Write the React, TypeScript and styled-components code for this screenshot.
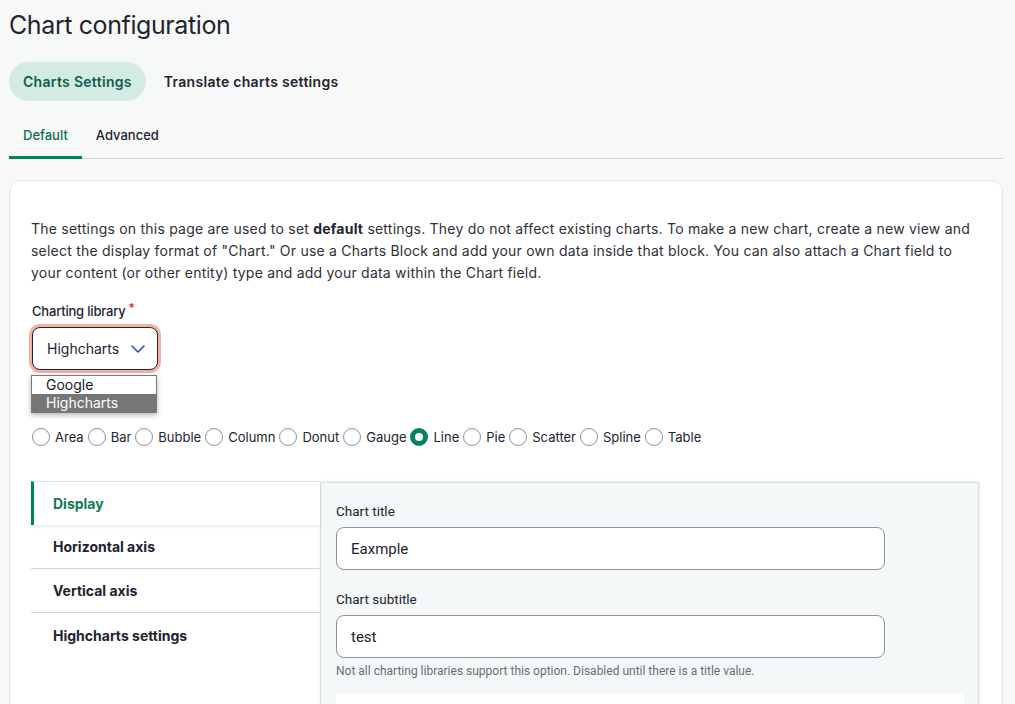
import React from "react";
import styled, { createGlobalStyle } from "styled-components";

const GlobalStyle = createGlobalStyle`
  html, body { margin: 0; padding: 0; }
  body {
    background: #f7f9f9;
    font-family: Inter, "Noto Sans", sans-serif;
    color: #232429;
    -webkit-font-smoothing: antialiased;
  }
  * { box-sizing: border-box; }
`;

const Page = styled.div`
  padding: 7px 12px 0 9px;
  height: 704px;
  overflow: hidden;
`;

const Title = styled.h1`
  margin: 0;
  font-size: 25px;
  line-height: 36px;
  font-weight: 400;
  letter-spacing: -0.4px;
  color: #222330;
`;

const PrimaryTabs = styled.nav`
  display: flex;
  gap: 4px;
  margin-top: 19px;
`;

const Pill = styled.a<{ $active?: boolean }>`
  display: flex;
  align-items: center;
  height: 39px;
  padding: 0 14px;
  border-radius: 20px;
  font-size: 14px;
  font-weight: 600;
  letter-spacing: 0.3px;
  background: ${(p) => (p.$active ? "#d4ebe4" : "transparent")};
  color: ${(p) => (p.$active ? "#0c5f4b" : "#222330")};
`;

const SecondaryTabs = styled.nav`
  display: flex;
  margin-top: 14px;
  border-bottom: 1px solid #d3d4d9;
`;

const SubTab = styled.a<{ $active?: boolean }>`
  padding: 10px 14px 11px;
  font-size: 13px;
  line-height: 20px;
  font-weight: 500;
  margin-bottom: -1px;
  border-bottom: 3px solid ${(p) => (p.$active ? "#00845f" : "transparent")};
  color: ${(p) => (p.$active ? "#0f6e53" : "#222330")};
`;

const Card = styled.section`
  margin-top: 21px;
  background: #fff;
  border: 1px solid #e6e8e8;
  border-radius: 12px;
  padding: 37px 23px 40px 21px;
`;

const Intro = styled.p`
  margin: 0;
  font-size: 14px;
  line-height: 22px;
  letter-spacing: 0.22px;
  color: #2e3038;
  strong { font-weight: 700; color: #222330; }
`;

const FieldLabel = styled.label`
  display: block;
  margin-top: 15px;
  font-size: 13px;
  line-height: 18px;
  font-weight: 500;
  letter-spacing: -0.2px;
  color: #222330;
  padding-left: 1px;
`;

const Required = styled.span`
  color: #d32b2b;
  font-size: 12px;
  vertical-align: 4px;
  margin-left: 3px;
`;

const SelectWrap = styled.div`
  position: relative;
  width: 126px;
  margin-top: 7px;
  margin-left: 1px;
`;

const SelectBox = styled.div`
  display: flex;
  align-items: center;
  justify-content: space-between;
  height: 43px;
  padding: 0 12px 0 14px;
  border: 1px solid #222330;
  border-radius: 8px;
  background: #fff;
  box-shadow: 0 0 0 3px #f2b1a3;
  font-size: 14px;
  color: #222330;
`;

const DropList = styled.ul`
  position: absolute;
  top: 48px;
  left: -1px;
  width: 126px;
  margin: 0;
  padding: 0;
  list-style: none;
  background: #fff;
  border: 1px solid #7a7a7a;
  box-shadow: 0 2px 5px rgba(0, 0, 0, 0.3);
  z-index: 5;
`;

const DropItem = styled.li<{ $selected?: boolean }>`
  height: 18px;
  line-height: 18px;
  padding-left: 14px;
  font-size: 14px;
  background: ${(p) => (p.$selected ? "#767676" : "#fff")};
  color: ${(p) => (p.$selected ? "#fff" : "#1b1b1b")};
`;

const RadioRow = styled.div`
  display: flex;
  align-items: center;
  flex-wrap: wrap;
  margin-top: 58px;
  margin-left: 1px;
`;

const RadioItem = styled.label`
  display: flex;
  align-items: center;
  gap: 5px;
  margin-right: 4px;
  font-size: 13px;
  line-height: 18px;
  color: #222330;
`;

const RadioCircle = styled.span<{ $checked?: boolean }>`
  width: 18px;
  height: 18px;
  border-radius: 50%;
  background: #fff;
  border: ${(p) => (p.$checked ? "5px solid #00845f" : "1px solid #8e929c")};
`;

const Tabs = styled.div`
  display: grid;
  grid-template-columns: 289px 1fr;
  margin-top: 35px;
`;

const VNav = styled.ul`
  margin: 0;
  padding: 0;
  list-style: none;
  position: relative;
  z-index: 2;
`;

const VNavItem = styled.li<{ $active?: boolean }>`
  height: 44px;
  display: flex;
  align-items: center;
  padding-left: ${(p) => (p.$active ? "19px" : "22px")};
  font-size: 14px;
  font-weight: 700;
  color: ${(p) => (p.$active ? "#0f7a59" : "#222330")};
  border-top: ${(p) => (p.$active ? "1px solid #dedfe3" : "none")};
  border-left: ${(p) => (p.$active ? "3px solid #00845f" : "none")};
  border-bottom: ${(p) => (p.$active ? "none" : "1px solid #d3d4d9")};
  background: ${(p) => (p.$active ? "#fff" : "transparent")};
  box-shadow: ${(p) => (p.$active ? "0 2px 3px rgba(0,0,0,0.08)" : "none")};
  &:last-child { border-bottom: none; }
`;

const Pane = styled.div`
  margin-top: 1px;
  background: #f5f8f8;
  border: 1px solid #dcdde1;
  border-bottom: none;
  box-shadow: 0 -1px 3px rgba(0, 0, 0, 0.06), 1px 0 2px rgba(0, 0, 0, 0.05);
  padding: 19px 14px 0 15px;
  min-height: 240px;
  font-family: Roboto, "Liberation Sans", sans-serif;
`;

const PaneLabel = styled.div<{ $first?: boolean }>`
  font-size: 13.5px;
  line-height: 18px;
  color: #222330;
  margin-top: ${(p) => (p.$first ? "0" : "20px")};
`;

const TextInput = styled.div`
  width: 549px;
  height: 43px;
  margin-top: 7px;
  display: flex;
  align-items: center;
  padding-left: 14px;
  border: 1px solid #8e929c;
  border-radius: 8px;
  background: #fff;
  font-size: 15px;
  color: #222330;
`;

const Description = styled.div`
  margin-top: 6px;
  font-size: 12px;
  line-height: 14px;
  color: #6b6d76;
`;

const SubPanel = styled.div`
  margin-top: 15px;
  height: 60px;
  background: #fff;
`;

const chartTypes = ["Area", "Bar", "Bubble", "Column", "Donut", "Gauge", "Line", "Pie", "Scatter", "Spline", "Table"];

export default function App() {
  return (
    <>
      <GlobalStyle />
      <Page>
        <Title>Chart configuration</Title>
        <PrimaryTabs>
          <Pill $active>Charts Settings</Pill>
          <Pill>Translate charts settings</Pill>
        </PrimaryTabs>
        <SecondaryTabs>
          <SubTab $active>Default</SubTab>
          <SubTab>Advanced</SubTab>
        </SecondaryTabs>
        <Card>
          <Intro>
            The settings on this page are used to set <strong>default</strong> settings. They do not affect existing
            charts. To make a new chart, create a new view and select the display format of "Chart." Or use a Charts
            Block and add your own data inside that block. You can also attach a Chart field to your content (or other
            entity) type and add your data within the Chart field.
          </Intro>
          <FieldLabel>
            Charting library<Required>*</Required>
          </FieldLabel>
          <SelectWrap>
            <SelectBox>
              <span>Highcharts</span>
              <svg width="14" height="8" viewBox="0 0 14 8" fill="none">
                <path d="M1 1l6 6 6-6" stroke="#2c4bc4" strokeWidth="1.6" strokeLinecap="round" strokeLinejoin="round" />
              </svg>
            </SelectBox>
            <DropList>
              <DropItem>Google</DropItem>
              <DropItem $selected>Highcharts</DropItem>
            </DropList>
          </SelectWrap>
          <RadioRow>
            {chartTypes.map((t) => (
              <RadioItem key={t}>
                <RadioCircle $checked={t === "Line"} />
                {t}
              </RadioItem>
            ))}
          </RadioRow>
          <Tabs>
            <VNav>
              <VNavItem $active>Display</VNavItem>
              <VNavItem>Horizontal axis</VNavItem>
              <VNavItem>Vertical axis</VNavItem>
              <VNavItem>Highcharts settings</VNavItem>
            </VNav>
            <Pane>
              <PaneLabel $first>Chart title</PaneLabel>
              <TextInput>Eaxmple</TextInput>
              <PaneLabel>Chart subtitle</PaneLabel>
              <TextInput>test</TextInput>
              <Description>Not all charting libraries support this option. Disabled until there is a title value.</Description>
              <SubPanel />
            </Pane>
          </Tabs>
        </Card>
      </Page>
    </>
  );
}
